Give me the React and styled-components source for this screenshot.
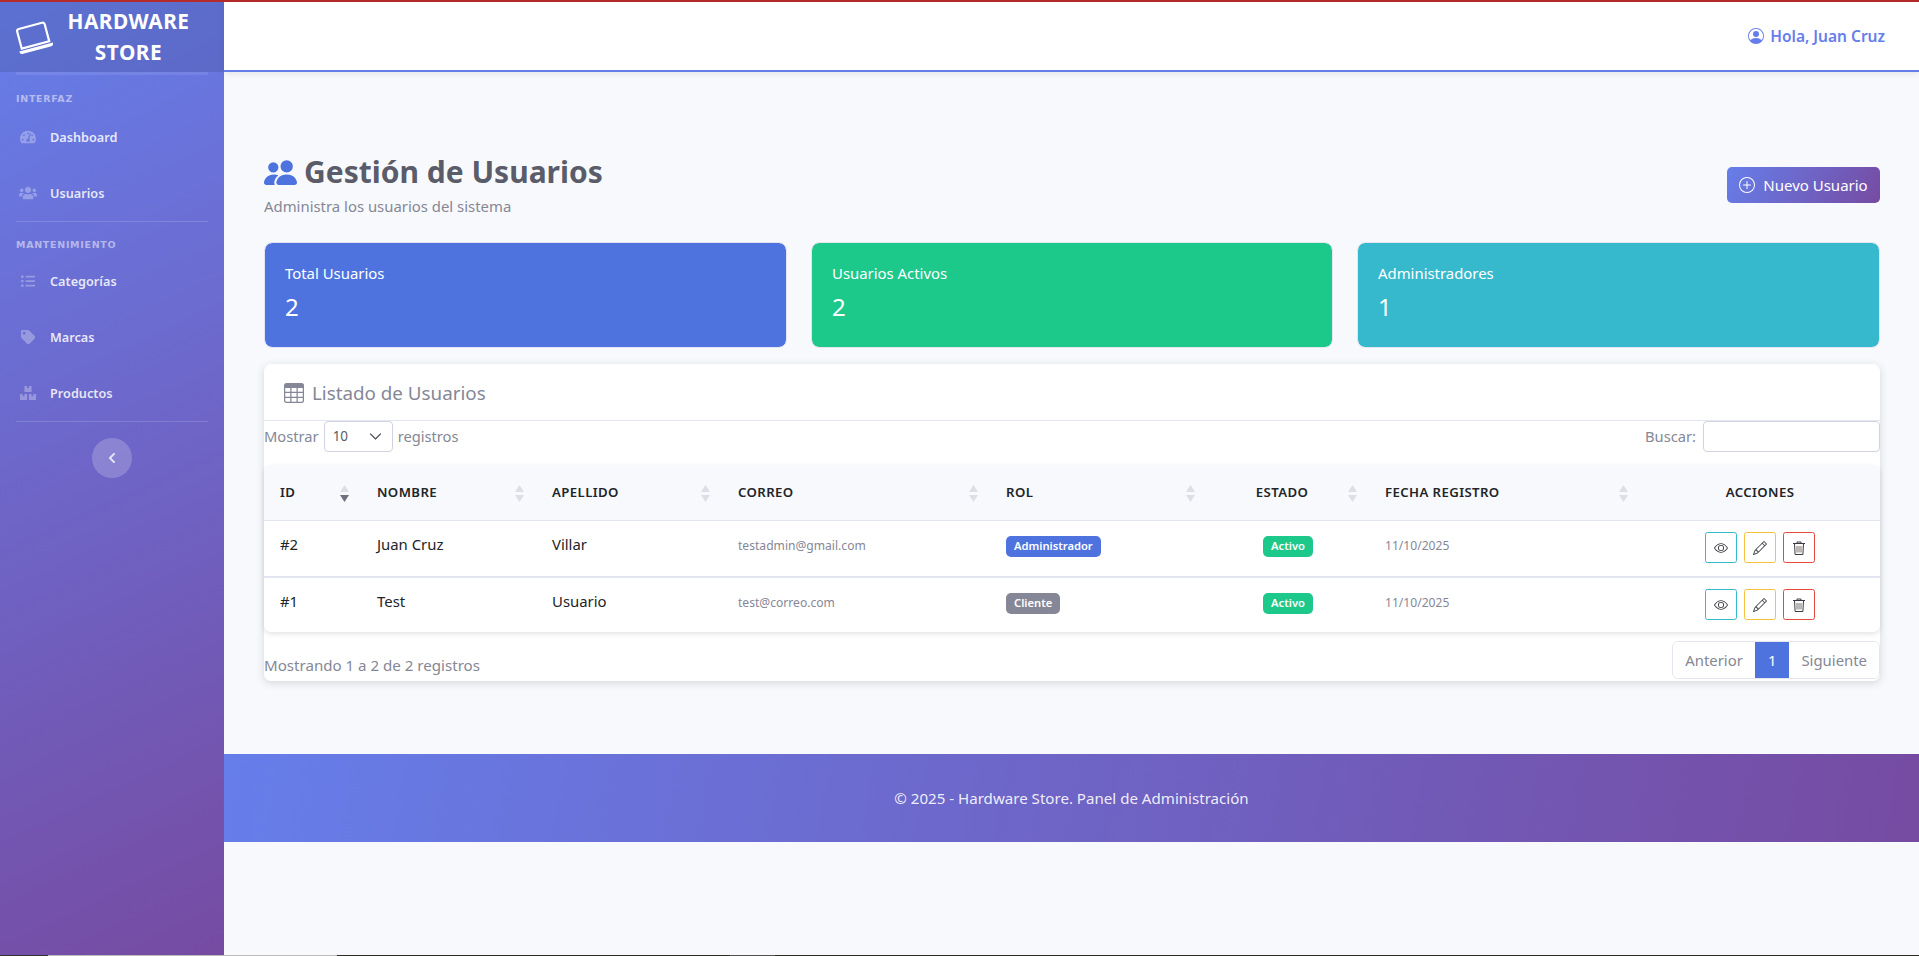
import React from "react";
import styled, { createGlobalStyle } from "styled-components";
import { BsLaptop, BsPeopleFill, BsPersonCircle, BsPlusCircle, BsTable, BsEye, BsPencil, BsChevronDown } from "react-icons/bs";
import { FaTachometerAlt, FaUsers, FaListUl, FaTag, FaBoxes, FaChevronLeft } from "react-icons/fa";

const Global = createGlobalStyle`
  html, body { margin: 0; padding: 0; background: #f8f9fc; }
  * { box-sizing: border-box; }
  body { font-family: "Noto Sans", "Open Sans", sans-serif; overflow: hidden; }
`;
const Page = styled.div`height: 956px; display: flex; flex-direction: column; overflow: hidden;`;
const RedLine = styled.div`height: 2px; flex: none; background: #b52a2a;`;
const Body = styled.div`flex: 1; display: flex; min-height: 0;`;
const Sidebar = styled.aside`
  width: 224px; flex: none; display: flex; flex-direction: column;
  background: linear-gradient(155deg, #667eea 0%, #764ba2 100%);
`;
const Brand = styled.div`
  height: 70px; padding: 0 26px 0 16px; display: flex; align-items: center; gap: 8px; flex: none;
  background: rgba(0,0,0,.1); color: #fff;
  svg { font-size: 35px; transform: rotate(-15deg); flex: none; }
`;
const BrandText = styled.div`flex: 1; text-align: center; font-size: 20.8px; line-height: 31px; font-weight: 700; letter-spacing: .5px;`;
const Divider = styled.hr`margin: 0 16px; border: 0; border-top: 1px solid rgba(255,255,255,.15); flex: none;`;
const BrandRule = styled(Divider)`border-top-width: 3px; opacity: .6;`;
const Heading = styled.div`
  padding: ${p => p.$top}px 16px 0; height: ${p => p.$h}px; flex: none;
  font-size: 9.5px; line-height: 14px; font-weight: 800; letter-spacing: .7px;
  color: rgba(255,255,255,.5); font-family: "DejaVu Sans", sans-serif; text-transform: uppercase;
`;
const NavItem = styled.a`
  height: 56px; flex: none; display: flex; align-items: center; padding: 0 16px; gap: 10px;
  color: rgba(255,255,255,.85); font-size: 12.7px; font-weight: 600;
`;
const NavIcon = styled.span`
  width: 24px; height: 18px; display: flex; align-items: center; justify-content: center; color: rgba(255,255,255,.3);
  svg { width: ${p => p.$w}px; height: ${p => p.$w}px; flex: none; }
`;
const Toggle = styled.button`
  width: 40px; height: 40px; border-radius: 50%; border: 0; margin: 16px auto 0; padding: 0; flex: none;
  background: rgba(255,255,255,.2); color: rgba(255,255,255,.8); display: flex; align-items: center; justify-content: center;
  svg { width: 12px; height: 12px; }
`;
const Main = styled.div`flex: 1; min-width: 0; display: flex; flex-direction: column;`;
const Topbar = styled.header`
  height: 70px; flex: none; background: #fff; border-bottom: 2px solid #667eea; box-shadow: 0 2px 6px rgba(58,59,69,.1);
  display: flex; align-items: center; justify-content: flex-end; padding: 0 34px 0 0;
`;
const Hello = styled.span`display: flex; align-items: center; gap: 6px; color: #667eea; font-size: 15.5px; font-weight: 600; svg { width: 16px; height: 16px; }`;
const Content = styled.main`padding: 80px 39px 0 40px; flex: none;`;
const HeaderRow = styled.div`display: flex; justify-content: space-between; align-items: flex-start; margin-bottom: 25px;`;
const Title = styled.h1`margin: 0 0 3px; display: flex; align-items: center; gap: 7px; font-size: 30px; line-height: 40px; font-weight: 700; color: #5a5c69; svg { color: #4e73df; width: 33px; height: 33px; }`;
const Subtitle = styled.p`margin: 0; font-size: 14.9px; line-height: 22px; color: #858796;`;
const NewButton = styled.button`
  height: 36px; width: 153px; margin-top: 15px; border: 0; border-radius: 5px; color: #fff; font: inherit; font-size: 15px; padding: 0;
  background: linear-gradient(120deg, #667eea, #764ba2);
  display: flex; align-items: center; justify-content: center; gap: 8px;
  svg { width: 16px; height: 16px; }
`;
const Stats = styled.div`display: grid; grid-template-columns: 523px 522px 1fr; gap: 24px; margin-bottom: 16px;`;
const Stat = styled.div`
  height: 106px; border-radius: 8px; padding: 19px 20px; color: #fff; background: ${p => p.$bg}; background-clip: padding-box;
  border: 1px solid #e3e6f0;
`;
const StatLabel = styled.div`font-size: 14.9px; line-height: 22px;`;
const StatValue = styled.div`font-size: 24px; line-height: 36px; margin-top: 5px;`;
const Card = styled.section`background: #fff; border-radius: 7px; box-shadow: 0 2px 8px rgba(58,59,69,.18); height: 317px; display: flex; flex-direction: column;`;
const CardHead = styled.div`
  height: 57px; flex: none; display: flex; align-items: center; gap: 8px; padding: 1px 20px 0;
  border-bottom: 1px solid #e3e6f0; color: #858796; font-size: 18.8px;
  svg { width: 20px; height: 20px; }
`;
const Tools = styled.div`height: 44px; flex: none; display: flex; justify-content: space-between; align-items: flex-start; color: #858796; font-size: 14.7px;`;
const ToolGroup = styled.label`display: flex; align-items: center; gap: 5px; height: 31px; padding-bottom: 1px;`;
const Select = styled.div`
  width: 69px; height: 31px; border: 1px solid #d1d3e2; border-radius: 4px; display: flex; align-items: center; justify-content: space-between; padding: 0 10px 0 8px; color: #5a5c69; font-size: 13.5px;
  svg { width: 13px; height: 13px; stroke-width: 1px; }
`;
const SearchBox = styled.input`width: 177px; height: 31px; border: 1px solid #d1d3e2; border-radius: 4px; margin-left: 2px; background: #fff;`;
const Table = styled.table`
  width: 100%; border-collapse: collapse; table-layout: fixed; flex: none;
  border-radius: 7px; box-shadow: 0 2px 5px rgba(58,59,69,.14);
  th { position: relative; height: 55px; padding: 0 16px; background: #f8f9fc; text-align: left; font-size: 13.2px; font-weight: 600; letter-spacing: .4px; color: #212529; border-bottom: 1px solid #e3e6f0; }
  th:first-child { border-top-left-radius: 7px; }
  th:last-child { border-top-right-radius: 7px; text-align: center; }
  td { height: 57px; padding: 0 16px 9px; font-size: 14.9px; color: #212529; border-bottom: 2px solid #e3e6f0; }
  tr:last-child td { height: 55px; border-bottom: 0; }
`;
const Sort = styled.svg`position: absolute; right: 12px; top: 20px; width: 9px; height: 17px;`;
const Small = styled.span`font-size: 12.1px; color: #858796;`;
const Badge = styled.span`display: inline-block; vertical-align: -3px; padding: 0 8px; height: 21px; line-height: 20px; border-radius: 5px; font-size: 11.2px; font-weight: 600; color: #fff; background: ${p => p.$bg};`;
const Centered = styled.td`&& { text-align: center; }`;
const CenteredHead = styled.th`&& { text-align: center; padding-right: 28px; }`;
const Actions = styled.div`display: flex; justify-content: center; gap: 7px; padding-top: 8px;`;
const ActionBtn = styled.button`
  width: 32px; height: 31px; padding: 0; border: 1px solid ${p => p.$c}; border-radius: 2.5px; background: #fff; color: #3a3b45;
  display: flex; align-items: center; justify-content: center; svg { width: 14px; height: 14px; }
`;
const Foot = styled.div`flex: 1; display: flex; justify-content: space-between; align-items: flex-start; padding-top: 9px; color: #858796; font-size: 14.9px;`;
const FootText = styled.span`margin-top: 13px; line-height: 22px; font-size: 15.1px;`;
const Pager = styled.div`display: flex; height: 38px; border: 1px solid #e3e6f0; border-radius: 6px; overflow: hidden;`;
const PageBtn = styled.span`display: flex; align-items: center; padding: 0 ${p => p.$p}px; color: ${p => p.$on ? "#fff" : "#858796"}; background: ${p => p.$on ? "#4e73df" : "#fff"};`;
const Footer = styled.footer`
  margin-top: 73px; height: 88px; flex: none; display: flex; align-items: center; justify-content: center;
  color: rgba(255,255,255,.9); font-size: 15.1px;
  background: linear-gradient(100deg, #667eea, #764ba2);
`;
const Taskbar = styled.div`height: 1px; flex: none; background: linear-gradient(90deg, #333 0 48px, #bbb 48px 337px, #2c2e25 337px 730px, #55554f 730px 775px, #2c2e25 775px);`;

const SortIcon = ({ active }) => (
  <Sort viewBox="0 0 9 17">
    <path d="M4.5 0L9 7H0z" fill="#dddfe6" />
    <path d="M4.5 17L0 10h9z" fill={active ? "#6e707e" : "#dddfe6"} />
  </Sort>
);
const TrashIcon = () => (
  <svg viewBox="0 0 14 14" fill="none" stroke="currentColor" strokeWidth="1">
    <path d="M5 2.5V1h4v1.5M1 2.5h12M2.5 2.5l.6 11h7.8l.6-11" />
    <path d="M5 5v6.5M7 5v6.5M9 5v6.5" stroke="#77716f" />
  </svg>
);
const users = [
  { id: "#2", n: "Juan Cruz", a: "Villar", m: "testadmin@gmail.com", r: "Administrador", bg: "#4e73df" },
  { id: "#1", n: "Test", a: "Usuario", m: "test@correo.com", r: "Cliente", bg: "#858796" },
];
const cols = [["ID", 97, true], ["NOMBRE", 175], ["APELLIDO", 186], ["CORREO", 268], ["ROL", 217], ["ESTADO", 162, false, true], ["FECHA REGISTRO", 271]];

export default function App() {
  return (
    <Page>
      <Global />
      <RedLine />
      <Body>
        <Sidebar>
          <Brand><BsLaptop /><BrandText>HARDWARE STORE</BrandText></Brand>
          <BrandRule />
          <Heading $top={17} $h={34}>Interfaz</Heading>
          <NavItem><NavIcon $w={16}><FaTachometerAlt /></NavIcon>Dashboard</NavItem>
          <NavItem><NavIcon $w={18}><FaUsers /></NavIcon>Usuarios</NavItem>
          <Divider />
          <Heading $top={16} $h={31}>Mantenimiento</Heading>
          <NavItem><NavIcon $w={14.4}><FaListUl /></NavIcon>Categorías</NavItem>
          <NavItem><NavIcon $w={14.4}><FaTag /></NavIcon>Marcas</NavItem>
          <NavItem><NavIcon $w={16}><FaBoxes /></NavIcon>Productos</NavItem>
          <Divider />
          <Toggle><FaChevronLeft /></Toggle>
        </Sidebar>
        <Main>
          <Topbar><Hello><BsPersonCircle />Hola, Juan Cruz</Hello></Topbar>
          <Content>
            <HeaderRow>
              <div>
                <Title><BsPeopleFill />Gestión de Usuarios</Title>
                <Subtitle>Administra los usuarios del sistema</Subtitle>
              </div>
              <NewButton><BsPlusCircle />Nuevo Usuario</NewButton>
            </HeaderRow>
            <Stats>
              <Stat $bg="#4e73df"><StatLabel>Total Usuarios</StatLabel><StatValue>2</StatValue></Stat>
              <Stat $bg="#1cc88a"><StatLabel>Usuarios Activos</StatLabel><StatValue>2</StatValue></Stat>
              <Stat $bg="#36b9cc"><StatLabel>Administradores</StatLabel><StatValue>1</StatValue></Stat>
            </Stats>
            <Card>
              <CardHead><BsTable />Listado de Usuarios</CardHead>
              <Tools>
                <ToolGroup>Mostrar <Select>10<BsChevronDown /></Select> registros</ToolGroup>
                <ToolGroup>Buscar: <SearchBox /></ToolGroup>
              </Tools>
              <Table>
                <colgroup>
                  {cols.map(c => <col key={c[0]} style={{ width: c[1] }} />)}
                  <col />
                </colgroup>
                <thead>
                  <tr>
                    {cols.map(c => c[3]
                      ? <CenteredHead key={c[0]}>{c[0]}<SortIcon /></CenteredHead>
                      : <th key={c[0]}>{c[0]}<SortIcon active={c[2]} /></th>)}
                    <th>ACCIONES</th>
                  </tr>
                </thead>
                <tbody>
                  {users.map(u => (
                    <tr key={u.id}>
                      <td>{u.id}</td>
                      <td>{u.n}</td>
                      <td>{u.a}</td>
                      <td><Small>{u.m}</Small></td>
                      <td><Badge $bg={u.bg}>{u.r}</Badge></td>
                      <Centered><Badge $bg="#1cc88a">Activo</Badge></Centered>
                      <td><Small>11/10/2025</Small></td>
                      <td>
                        <Actions>
                          <ActionBtn $c="#36b9cc"><BsEye /></ActionBtn>
                          <ActionBtn $c="#f6c23e"><BsPencil /></ActionBtn>
                          <ActionBtn $c="#e74a3b"><TrashIcon /></ActionBtn>
                        </Actions>
                      </td>
                    </tr>
                  ))}
                </tbody>
              </Table>
              <Foot>
                <FootText>Mostrando 1 a 2 de 2 registros</FootText>
                <Pager>
                  <PageBtn $p={12}>Anterior</PageBtn>
                  <PageBtn $p={13} $on>1</PageBtn>
                  <PageBtn $p={12}>Siguiente</PageBtn>
                </Pager>
              </Foot>
            </Card>
          </Content>
          <Footer>© 2025 - Hardware Store. Panel de Administración</Footer>
        </Main>
      </Body>
      <Taskbar />
    </Page>
  );
}
